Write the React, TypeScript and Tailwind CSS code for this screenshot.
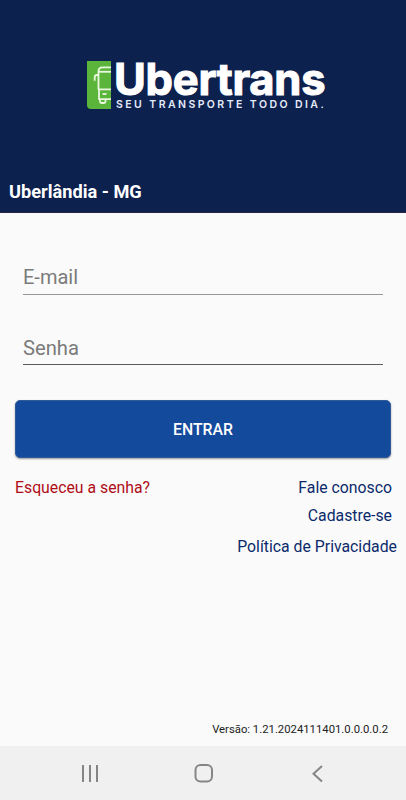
import { useState } from 'react';

interface FooterLink {
  label: string;
  className: string;
}

const links: FooterLink[] = [
  { label: 'Fale conosco', className: 'mr-3.5 h-7' },
  { label: 'Cadastre-se', className: 'mr-3.5 h-[31px]' },
  { label: 'Política de Privacidade', className: 'mr-[9px] h-7' },
];

export default function App() {
  const [email, setEmail] = useState('');
  const [password, setPassword] = useState('');

  return (
    <div className="flex h-[800px] w-full flex-col overflow-hidden bg-[#fafafa] font-[Roboto,sans-serif]">
      {/* Header */}
      <header className="flex h-[213px] shrink-0 flex-col border-b border-[#2a2149] bg-[#0d214f]">
        <Logo />
        <h1 className="mt-auto pb-2 pl-[9px] text-[18.2px] leading-6 font-bold text-white">
          Uberlândia - MG
        </h1>
      </header>

      {/* Login form */}
      <main className="flex flex-1 flex-col">
        <form
          onSubmit={(e) => e.preventDefault()}
          className="flex flex-col px-[15px] pt-[47px]"
        >
          <input
            type="email"
            value={email}
            onChange={(e) => setEmail(e.target.value)}
            placeholder="E-mail"
            className="mx-2 h-[35px] border-b border-[#979797] text-[20px] text-[#222] placeholder-[#7b7b7b] outline-none"
          />
          <input
            type="password"
            value={password}
            onChange={(e) => setPassword(e.target.value)}
            placeholder="Senha"
            className="mx-2 mt-9 h-[34px] border-b border-[#5b5b5b] text-[20.2px] text-[#222] placeholder-[#7b7b7b] outline-none"
          />
          <button
            type="submit"
            className="mt-[35px] h-[58px] rounded-[5px] border border-[#315a98] bg-[#144a9c] pt-px text-[15.8px] font-medium text-white shadow-[0_1px_2px_rgba(0,0,0,0.4)]"
          >
            ENTRAR
          </button>
        </form>

        <div className="mt-4 flex items-start justify-between text-[15.8px] leading-7">
          <a href="#" className="ml-[15px] text-[#b00d17]">
            Esqueceu a senha?
          </a>
          <nav className="flex flex-col items-end text-[#0c2a6b]">
            {links.map((link) => (
              <a key={link.label} href="#" className={link.className}>
                {link.label}
              </a>
            ))}
          </nav>
        </div>

        <p className="mt-auto pr-[18px] pb-2 text-right text-[11.3px] leading-4 text-[#222]">
          Versão: 1.21.2024111401.0.0.0.0.2
        </p>
      </main>

      <NavigationBar />
    </div>
  );
}

function Logo() {
  return (
    <div className="flex pt-[61px] pl-[86px]">
      <svg width="25" height="48" viewBox="0 0 25 48" fill="none">
        <path d="M1 0h24v48H5a4 4 0 0 1-4-4z" fill="#5bb53b" />
        <g stroke="#e9f7df" strokeWidth="1.8" strokeLinejoin="round">
          <path d="M25 6.300h-8.500q-4 0-4 4v18h12.500" />
          <path d="M13 10.800h12" />
          <path d="M12.500 14H11q-2.300 0-2.300 2.300v3.500" />
          <path d="M13 28v10.200h12" />
          <path d="M16.500 33h4" />
          <path d="M14 38v2.500q0 1.500 1.500 1.500h2.500q1.500 0 1.500-1.500V38" />
        </g>
      </svg>
      <div className="flex flex-col whitespace-nowrap text-white">
        <svg width="216" height="37" viewBox="0 0 216 37" fill="currentColor" className="overflow-visible">
          <text
            x="3"
            y="33.500"
            textLength="211.500"
            className="font-[Inter,sans-serif] text-[43.5px] font-bold [stroke:currentColor] [stroke-width:1.1]"
          >
            Ubertrans
          </text>
        </svg>
        <span className="ml-[5px] pt-px font-[Inter,sans-serif] text-[10.5px] leading-3 font-semibold tracking-[2.43px] text-[#e6ebfa]">
          SEU TRANSPORTE TODO DIA.
        </span>
      </div>
    </div>
  );
}

function NavigationBar() {
  return (
    <footer className="flex h-[54px] shrink-0 items-center justify-center gap-[90px] bg-[#f0f0f0] pl-0.5 text-[#858585]">
      <svg width="24" height="24" viewBox="0 0 24 24" stroke="currentColor" strokeWidth="2">
        <path d="M5 4v17M12 4v17M19 4v17" />
      </svg>
      <svg width="24" height="24" viewBox="0 0 24 24" fill="none" stroke="currentColor" strokeWidth="2">
        <rect x="3.500" y="4" width="16.500" height="16.500" rx="5" />
      </svg>
      <svg width="24" height="24" viewBox="0 0 24 24" fill="none" stroke="currentColor" strokeWidth="2">
        <path d="M16 5l-8.500 7.700 8.500 7.800" />
      </svg>
    </footer>
  );
}
